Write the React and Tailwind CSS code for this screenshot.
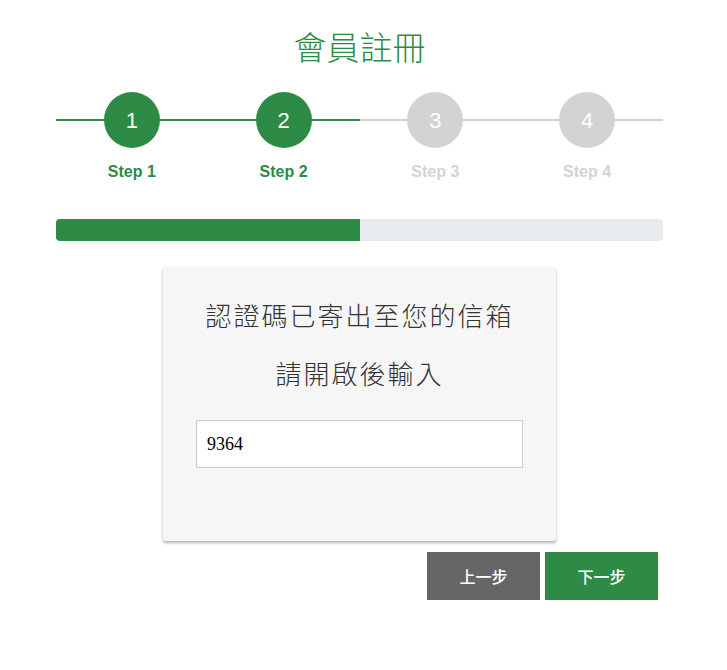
import React, { useState } from 'react';

const steps = [1, 2, 3, 4];

const App = () => {
  const [current] = useState(2);
  const [code, setCode] = useState('9364');

  return (
    <div className="w-[727px] min-h-[670px] bg-white font-['Liberation_Sans','Noto_Sans_CJK_TC',sans-serif]">
      <div className="ml-[56px] w-[607px] pt-[24px]">
        {/* Title */}
        <h1 className="text-center text-[33px] leading-[44px] font-light text-[#2e8b46] font-['Noto_Sans_CJK_TC',sans-serif]">
          會員註冊
        </h1>

        {/* Steps */}
        <div className="grid grid-cols-4 mt-[24px]">
          {steps.map((s) => {
            const done = s <= current;
            return (
              <div key={s} className="flex flex-col items-center">
                <div className="relative w-full flex justify-center">
                  <div
                    className={`absolute left-0 right-0 top-[27px] h-[2px] ${
                      done ? 'bg-[#2e8b46]' : 'bg-[#d3d3d3]'
                    }`}
                  />
                  <div
                    className={`relative w-[56px] h-[56px] rounded-full flex items-center justify-center text-white text-[22px] ${
                      done ? 'bg-[#2e8b46]' : 'bg-[#d3d3d3]'
                    }`}
                  >
                    {s}
                  </div>
                </div>
                <div
                  className={`mt-[12px] text-[16px] font-bold ${
                    done ? 'text-[#2e8b46]' : 'text-[#d3d3d3]'
                  }`}
                >
                  Step {s}
                </div>
              </div>
            );
          })}
        </div>

        {/* Progress */}
        <div className="mt-[35px] h-[22px] rounded-[4px] bg-[#e9ecef] overflow-hidden">
          <div className="h-full w-1/2 bg-[#2e8b46]" />
        </div>

        {/* Card */}
        <div className="mt-[26px] mx-auto w-[393px] h-[274px] bg-[#f6f6f6] rounded-[2px] shadow-[0_2px_3px_rgba(0,0,0,0.3)] px-[33px] pt-[30px]">
          <p className="text-center text-[26px] tracking-[2px] leading-[36px] text-[#333] font-['Noto_Sans_CJK_TC',sans-serif] font-light">
            認證碼已寄出至您的信箱
          </p>
          <p className="mt-[22px] text-center text-[26px] tracking-[2px] leading-[36px] text-[#333] font-['Noto_Sans_CJK_TC',sans-serif] font-light">
            請開啟後輸入
          </p>
          <input
            type="text"
            value={code}
            onChange={(e) => setCode(e.target.value)}
            className="mt-[29px] w-full h-[48px] bg-white border border-[#ccc] px-[10px] text-[18px] text-black font-['Liberation_Serif',serif] outline-none"
          />
        </div>

        {/* Buttons */}
        <div className="flex justify-end gap-[5px] mt-[11px] mr-[5px]">
          <button className="w-[113px] h-[48px] bg-[#666] text-white text-[16px] font-medium font-['Noto_Sans_CJK_TC',sans-serif]">
            上一步
          </button>
          <button className="w-[113px] h-[48px] bg-[#2e8b46] text-white text-[16px] font-medium font-['Noto_Sans_CJK_TC',sans-serif]">
            下一步
          </button>
        </div>
      </div>
    </div>
  );
};

export default App;
